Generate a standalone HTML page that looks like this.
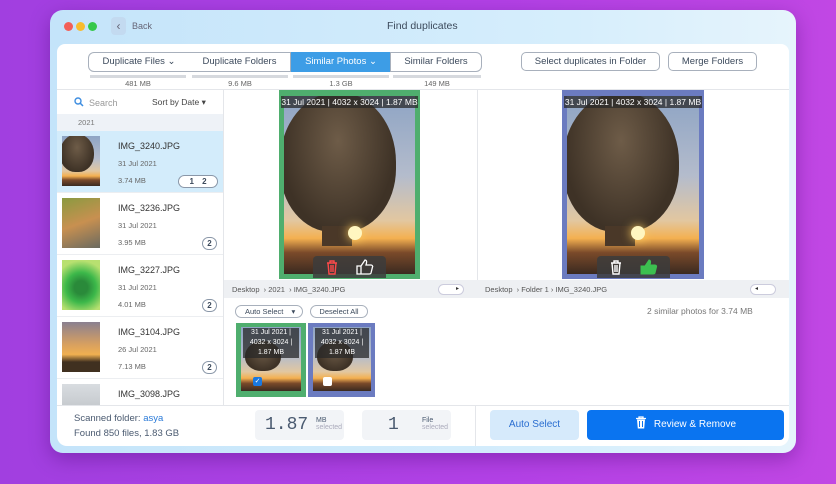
<!DOCTYPE html><html><head><style>
*{box-sizing:border-box;margin:0;padding:0}
body{width:836px;height:484px;overflow:hidden;background:linear-gradient(90deg,#a13fe0,#b341e6 60%,#c147e4);font-family:"Liberation Sans",sans-serif;position:relative;color:#333}
.a{position:absolute}
.win{left:50px;top:10px;width:746px;height:443px;border-radius:13px;background:linear-gradient(90deg,#c4e4fa,#d6eefc 70%,#e6f4fc);box-shadow:0 6px 20px rgba(60,0,100,.35)}
.panel{left:57px;top:44px;width:732px;height:402px;background:#fff;border-radius:8px 8px 10px 10px;overflow:hidden}
.dot{width:9px;height:9px;border-radius:50%;top:22px}
.tab{top:52px;height:20px;border:1px solid #a8b0bc;font-size:9.5px;color:#3c4a5c;text-align:center;line-height:18px;background:#fff}
.bar{top:75px;height:3px;background:#d6d9de}
.sz{top:79px;font-size:7.5px;color:#666;text-align:center}
.btn{height:19px;border:1px solid #a8b0bc;border-radius:5px;font-size:9.5px;color:#3c4a5c;text-align:center;line-height:17px;background:#fff}
.item{left:57px;width:166px;height:62px;border-bottom:1px solid #eceef1}
.th{left:5px;top:5px;width:38px;height:50px;overflow:hidden}
.nm{left:61px;top:10px;font-size:9px;color:#333}
.dt{left:61px;top:28px;font-size:7.5px;color:#666}
.mb{left:61px;top:45px;font-size:7.5px;color:#666}
.bd{left:145px;top:44px;width:15px;height:13px;border:1px solid #8a97a8;border-radius:7px;font-size:8px;font-weight:bold;text-align:center;line-height:11px;color:#3c4a5c}
.photo{background:linear-gradient(180deg,#8ea4c4 0%,#b4bccc 45%,#e2c7a0 70%,#f4b050 80%,#7a4a2a 88%,#3a2a20 100%);overflow:hidden}
.ball{background:radial-gradient(ellipse at 50% 35%,#6e5c48,#3e3226 70%);border-radius:50% 50% 45% 45%}
.cap{background:rgba(40,40,40,.75);color:#fff;font-size:8px;text-align:center;white-space:nowrap}
</style></head><body>
<div class="a win"></div>
<div class="a dot" style="left:64px;background:#f25f58"></div>
<div class="a dot" style="left:76px;background:#f8bc2e"></div>
<div class="a dot" style="left:88px;background:#35c84a"></div>
<div class="a" style="left:111px;top:17px;width:15px;height:18px;background:#c3daf0;border-radius:4px;color:#667;font-size:12px;text-align:center;line-height:18px">‹</div>
<div class="a" style="left:132px;top:21px;font-size:9px;color:#667">Back</div>
<div class="a" style="left:387px;top:20px;font-size:10.5px;color:#3c4a5c">Find duplicates</div>
<div class="a panel"></div>
<div class="a tab" style="left:88px;width:102px;border-radius:6px 0 0 6px">Duplicate Files ⌄</div>
<div class="a tab" style="left:189px;width:102px;border-left:none">Duplicate Folders</div>
<div class="a tab" style="left:291px;width:100px;background:#3d9de6;border-color:#3d9de6;color:#fff">Similar Photos ⌄</div>
<div class="a tab" style="left:390px;width:92px;border-radius:0 6px 6px 0">Similar Folders</div>
<div class="a bar" style="left:90px;width:96px"></div><div class="a bar" style="left:192px;width:96px"></div><div class="a bar" style="left:293px;width:96px"></div><div class="a bar" style="left:393px;width:88px"></div>
<div class="a sz" style="left:90px;width:96px">481 MB</div><div class="a sz" style="left:192px;width:96px">9.6 MB</div><div class="a sz" style="left:293px;width:96px">1.3 GB</div><div class="a sz" style="left:393px;width:88px">149 MB</div>
<div class="a btn" style="left:521px;top:52px;width:139px">Select duplicates in Folder</div>
<div class="a btn" style="left:668px;top:52px;width:89px">Merge Folders</div>
<div class="a" style="left:57px;top:89px;width:732px;height:1px;background:#e4e6ea"></div>
<div class="a" style="left:223px;top:90px;width:1px;height:315px;background:#e4e6ea"></div>
<svg class="a" style="left:74px;top:97px" width="10" height="10" viewBox="0 0 10 10"><circle cx="4" cy="4" r="3" fill="none" stroke="#3d8de0" stroke-width="1.4"/><path d="M6.2 6.2L9 9" stroke="#3d8de0" stroke-width="1.5"/></svg>
<div class="a" style="left:89px;top:98px;font-size:9px;color:#999">Search</div>
<div class="a" style="left:152px;top:97px;font-size:8.5px;color:#444">Sort by Date ▾</div>
<div class="a" style="left:57px;top:114px;width:166px;height:17px;background:#eef2f7;font-size:7.5px;color:#777;padding:4px 0 0 21px">2021</div>
<div class="a item" style="top:131px;background:#d3ecfb"><div class="a th photo"><div class="a ball" style="left:-2px;top:-2px;width:34px;height:38px"></div></div><div class="a nm">IMG_3240.JPG</div><div class="a dt">31 Jul 2021</div><div class="a mb">3.74 MB</div><div class="a bd" style="left:121px;width:40px;background:#fff;word-spacing:6px">1 2</div></div>
<div class="a item" style="top:193px"><div class="a th" style="background:linear-gradient(160deg,#8a9a40,#c89050 50%,#6a6a60)"></div><div class="a nm">IMG_3236.JPG</div><div class="a dt">31 Jul 2021</div><div class="a mb">3.95 MB</div><div class="a bd">2</div></div>
<div class="a item" style="top:255px"><div class="a th" style="background:radial-gradient(circle at 50% 55%,#2a8a3a 20%,#3cb84a 45%,#b8e070 80%)"></div><div class="a nm">IMG_3227.JPG</div><div class="a dt">31 Jul 2021</div><div class="a mb">4.01 MB</div><div class="a bd">2</div></div>
<div class="a item" style="top:317px"><div class="a th" style="background:linear-gradient(180deg,#8a8090,#d8a060 45%,#f0b050 65%,#403020 80%)"></div><div class="a nm">IMG_3104.JPG</div><div class="a dt">26 Jul 2021</div><div class="a mb">7.13 MB</div><div class="a bd">2</div></div>
<div class="a item" style="top:379px;height:26px;overflow:hidden;border:none"><div class="a th" style="background:linear-gradient(180deg,#d8dce0,#b0b4b8)"></div><div class="a nm">IMG_3098.JPG</div></div>
<!-- main photos -->
<div class="a" style="left:279px;top:90px;width:141px;height:189px;background:#4fae6e"></div>
<div class="a photo" style="left:284px;top:96px;width:131px;height:178px"><div class="a ball" style="left:-4px;top:-4px;width:116px;height:140px"></div><div class="a" style="left:38px;top:130px;width:30px;height:20px;background:#4a3828"></div><div class="a" style="left:64px;top:130px;width:14px;height:14px;border-radius:50%;background:#fff6c0;box-shadow:0 0 10px #ffd060"></div></div>
<div class="a cap" style="left:281px;top:96px;width:137px;height:12px;font-size:8.5px;line-height:12px">31 Jul 2021 | 4032 x 3024 | 1.87 MB</div>
<div class="a" style="left:313px;top:256px;width:73px;height:22px;background:rgba(60,60,60,.85);border-radius:4px 4px 0 0"></div>
<svg class="a" style="left:324px;top:259px" width="16" height="16" viewBox="0 0 16 16"><path d="M3 4h10M6 4V2h4v2M4 4l1 11h6l1-11M7 6v7M9 6v7" fill="none" stroke="#ff4a4a" stroke-width="1.4"/></svg>
<svg class="a" style="left:356px;top:258px" width="18" height="17" viewBox="0 0 18 17"><path d="M1 8h4v8H1zM5 8l4-6c1 0 2 1 1.5 3L10 7h5c1 0 2 1 1.5 2l-1.5 6c-.3 1-1 1-2 1H5" fill="none" stroke="#fff" stroke-width="1.3"/></svg>
<div class="a" style="left:562px;top:90px;width:142px;height:189px;background:#6b7bc0"></div>
<div class="a photo" style="left:567px;top:96px;width:132px;height:178px"><div class="a ball" style="left:-4px;top:-4px;width:116px;height:140px"></div><div class="a" style="left:38px;top:130px;width:30px;height:20px;background:#4a3828"></div><div class="a" style="left:64px;top:130px;width:14px;height:14px;border-radius:50%;background:#fff6c0;box-shadow:0 0 10px #ffd060"></div></div>
<div class="a cap" style="left:564px;top:96px;width:138px;height:12px;font-size:8.5px;line-height:12px">31 Jul 2021 | 4032 x 3024 | 1.87 MB</div>
<div class="a" style="left:597px;top:256px;width:73px;height:22px;background:rgba(60,60,60,.85);border-radius:4px 4px 0 0"></div>
<svg class="a" style="left:608px;top:259px" width="16" height="16" viewBox="0 0 16 16"><path d="M3 4h10M6 4V2h4v2M4 4l1 11h6l1-11M7 6v7M9 6v7" fill="none" stroke="#fff" stroke-width="1.4"/></svg>
<svg class="a" style="left:640px;top:258px" width="18" height="17" viewBox="0 0 18 17"><path d="M1 8h4v8H1zM5 8l4-6c1 0 2 1 1.5 3L10 7h5c1 0 2 1 1.5 2l-1.5 6c-.3 1-1 1-2 1H5z" fill="#3cc050" stroke="#3cc050" stroke-width="1"/></svg>
<div class="a" style="left:477px;top:90px;width:1px;height:208px;background:#e4e6ea"></div>
<div class="a" style="left:224px;top:280px;width:565px;height:18px;background:#eef0f3"></div>
<div class="a" style="left:232px;top:285px;font-size:7.5px;color:#555">Desktop &nbsp;› 2021 &nbsp;› IMG_3240.JPG</div>
<div class="a" style="left:485px;top:285px;font-size:7.5px;color:#555">Desktop &nbsp;› Folder 1 › IMG_3240.JPG</div>
<div class="a" style="left:438px;top:284px;width:26px;height:11px;border:1px solid #ccd;border-radius:6px;background:#fff;font-size:6px;text-align:right;padding-right:4px;line-height:9px">▸</div>
<div class="a" style="left:750px;top:284px;width:26px;height:11px;border:1px solid #ccd;border-radius:6px;background:#fff;font-size:6px;padding-left:4px;line-height:9px">◂</div>
<div class="a btn" style="left:235px;top:305px;width:68px;height:13px;line-height:11px;font-size:7.5px;border-radius:7px;text-align:left;padding-left:9px">Auto Select <span style="margin-left:6px">▾</span></div>
<div class="a btn" style="left:310px;top:305px;width:58px;height:13px;line-height:11px;font-size:7.5px;border-radius:7px">Deselect All</div>
<div class="a" style="left:647px;top:306px;font-size:8.5px;color:#777">2 similar photos for 3.74 MB</div>
<div class="a" style="left:236px;top:323px;width:70px;height:74px;background:#4fae6e"></div>
<div class="a photo" style="left:241px;top:327px;width:60px;height:64px"><div class="a ball" style="left:4px;top:14px;width:36px;height:30px"></div></div>
<div class="a cap" style="left:243px;top:328px;width:56px;height:30px;font-size:7px;line-height:10px">31 Jul 2021 |<br>4032 x 3024 |<br>1.87 MB</div>
<div class="a" style="left:253px;top:377px;width:9px;height:9px;background:#1a78e0;border-radius:2px;color:#fff;font-size:7px;line-height:9px;text-align:center">✓</div>
<div class="a" style="left:308px;top:323px;width:67px;height:74px;background:#6b7bc0"></div>
<div class="a photo" style="left:313px;top:327px;width:58px;height:64px"><div class="a ball" style="left:4px;top:14px;width:36px;height:30px"></div></div>
<div class="a cap" style="left:315px;top:328px;width:54px;height:30px;font-size:7px;line-height:10px">31 Jul 2021 |<br>4032 x 3024 |<br>1.87 MB</div>
<div class="a" style="left:323px;top:377px;width:9px;height:9px;background:#fff;border-radius:2px"></div>
<!-- bottom -->
<div class="a" style="left:57px;top:405px;width:732px;height:1px;background:#e4e6ea"></div>
<div class="a" style="left:475px;top:406px;width:1px;height:40px;background:#e4e6ea"></div>
<div class="a" style="left:74px;top:413px;font-size:9.5px;color:#4a5a70">Scanned folder: <span style="color:#2a7ad8">asya</span></div>
<div class="a" style="left:74px;top:428px;font-size:9.5px;color:#4a5a70">Found 850 files, 1.83 GB</div>
<div class="a" style="left:255px;top:410px;width:89px;height:30px;background:#f2f4f7;border-radius:4px"><span class="a" style="left:10px;top:5px;font-family:'Liberation Mono',monospace;font-size:18px;color:#4a5a70">1.87</span><span class="a" style="left:61px;top:7px;font-size:7px;color:#4a5a70;line-height:7px">MB<br><span style="color:#aab">selected</span></span></div>
<div class="a" style="left:362px;top:410px;width:89px;height:30px;background:#f2f4f7;border-radius:4px"><span class="a" style="left:26px;top:5px;font-family:'Liberation Mono',monospace;font-size:18px;color:#4a5a70">1</span><span class="a" style="left:60px;top:7px;font-size:7px;color:#4a5a70;line-height:7px">File<br><span style="color:#aab">selected</span></span></div>
<div class="a" style="left:490px;top:410px;width:89px;height:30px;background:#d6eafb;border-radius:4px;color:#2a6ed0;font-size:10px;text-align:center;line-height:30px">Auto Select</div>
<div class="a" style="left:587px;top:410px;width:197px;height:30px;background:#0a74f0;border-radius:4px;color:#fff;font-size:10px;text-align:center;line-height:30px"><svg width="12" height="13" viewBox="0 0 12 13" style="vertical-align:-2px;margin-right:7px"><path d="M1 2.5h10M4 2.5V1h4v1.5" fill="none" stroke="#fff" stroke-width="1.3"/><path d="M2 3.5h8l-.8 9H2.8z" fill="#fff"/><path d="M4.5 5v6M7.5 5v6" stroke="#0a74f0" stroke-width="1"/></svg>Review &amp; Remove</div>
</body></html>
